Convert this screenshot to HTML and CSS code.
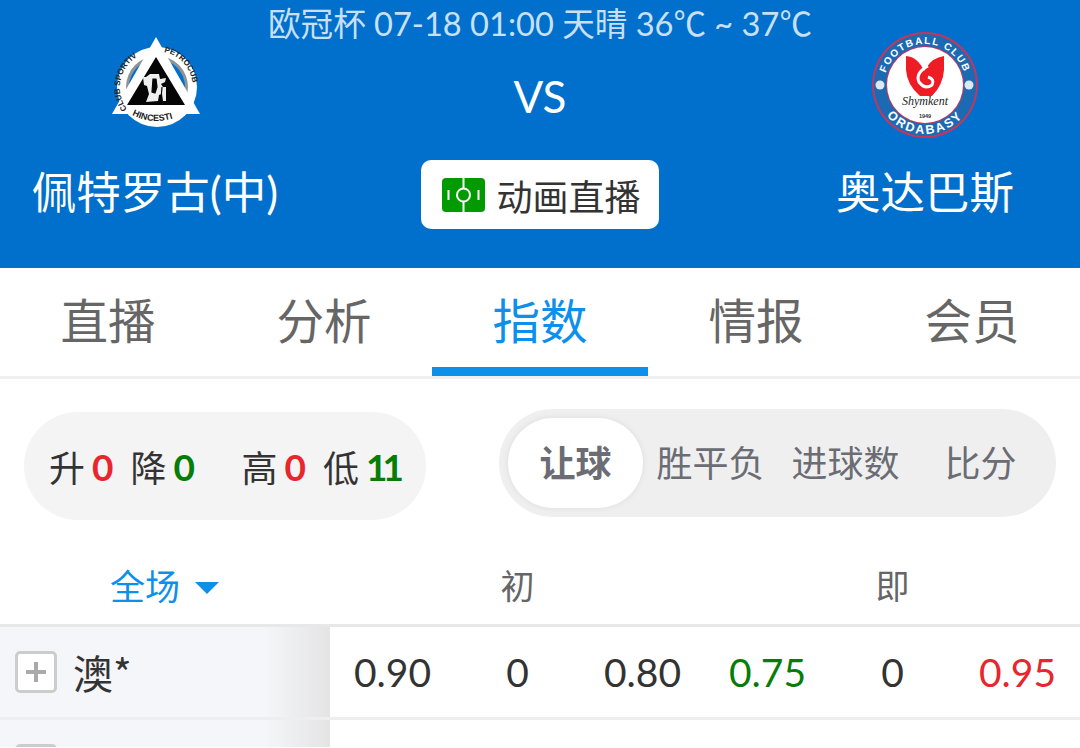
FILE: index.html
```html
<!DOCTYPE html>
<html lang="zh-CN">
<head>
  <meta charset="UTF-8">
  <meta name="viewport" content="width=device-width, initial-scale=1.0">
  <title>指数</title>
  <link rel="stylesheet" href="styles.css">
</head>
<body>
  <header class="match">
    <div class="match-info">欧冠杯 07-18 01:00 天晴 36℃ ~ 37℃</div>
    <div class="match-main">
      <div class="team">
        <svg class="team-logo" viewBox="0 7 130 106">
          <defs>
            <path id="leftArc" d="M37 84A36 36 0 0 1 60 27"/>
            <path id="rightArc" d="M74 27A36 36 0 0 1 97 82"/>
            <path id="hinArc" d="M42 90Q66 102 92 90"/>
          </defs>
          <circle cx="67" cy="62" r="40" fill="#fff"/>
          <circle cx="67" cy="62" r="31" fill="#8d9398"/>
          <circle cx="67" cy="62" r="28" fill="#0070cc"/>
          <path d="M37 86Q66 112 97 86Z" fill="#fff"/>
          <path d="M66 12L110 89H22Z" fill="#fff"/>
          <path d="M66 32L95 80H37Z" fill="#050505"/>
          <path d="M60 49h9l1 5l6-1l-1 4l-4 2l2 3l3 0v14h-3l-1-7l-3 1l-1 6l-12 1l3-8l-2-8l-3-1l-1-8l3 0z" fill="#eee"/>
          <path d="M63 54l3 0l1 8l-2 6l-3-1zM72 62l-1 12" stroke="#050505" stroke-width="1.2" fill="#050505"/>
          <text class="logo-ring" fill="#222"><textPath href="#leftArc">CLUB SPORTIV</textPath></text>
          <text class="logo-ring" fill="#222"><textPath href="#rightArc">PETROCUB</textPath></text>
          <text class="logo-hin" fill="#222"><textPath href="#hinArc">HINCESTI</textPath></text>
        </svg>
        <div class="team-name">佩特罗古(中)</div>
      </div>
      <div class="center">
        <div class="vs">VS</div>
        <div class="live-btn">
          <svg class="pitch" viewBox="0 0 43 34">
            <rect width="43" height="34" rx="4" fill="#019a01"/>
            <path d="M21.5 0V34M6.500 12V22M36.500 12V22" stroke="#fff" stroke-width="2" fill="none"/>
            <circle cx="21.5" cy="17" r="6.500" fill="#019a01" stroke="#fff" stroke-width="2"/>
          </svg>
          <span>动画直播</span>
        </div>
      </div>
      <div class="team">
        <svg class="team-logo" viewBox="0 7 130 106">
          <defs>
            <path id="topArc" d="M24 60A41 41 0 0 1 106 60"/>
            <path id="botArc" d="M16 60A49 49 0 0 0 114 60"/>
          </defs>
          <circle cx="65" cy="60" r="53" fill="#c2385c"/>
          <circle cx="65" cy="60" r="51" fill="#1c69b4"/>
          <circle cx="65" cy="60" r="39" fill="#c2385c"/>
          <circle cx="65" cy="60" r="38" fill="#fff"/>
          <path d="M46 31Q58 32 64 46L67 42Q72 33 84 31V45Q83 60 72 71H60Q47 60 46 45Z" fill="#ee1c25"/>
          <path d="M68 41Q55 48 59 57Q65 65 72 60Q75 54 68 52" fill="none" stroke="#fff" stroke-width="3"/>
          <circle cx="20" cy="60" r="4.500" fill="#dce9f5"/>
          <circle cx="109" cy="60" r="4.500" fill="#dce9f5"/>
          <text class="logo-top" fill="#fff"><textPath href="#topArc" startOffset="50%" text-anchor="middle">FOOTBALL CLUB</textPath></text>
          <text class="logo-bot" fill="#fff"><textPath href="#botArc" startOffset="50%" text-anchor="middle">ORDABASY</textPath></text>
          <text class="logo-script" x="65" y="80" text-anchor="middle" fill="#222">Shymkent</text>
          <text class="logo-year" x="65" y="93" text-anchor="middle" fill="#333">1949</text>
        </svg>
        <div class="team-name">奥达巴斯</div>
      </div>
    </div>
  </header>

  <nav class="tabs">
    <div class="tab">直播</div>
    <div class="tab">分析</div>
    <div class="tab active">指数</div>
    <div class="tab">情报</div>
    <div class="tab">会员</div>
  </nav>

  <section class="filters">
    <div class="stats">
      <div class="stat-group">
        <span>升</span><b class="red">0</b>
        <span class="stat-next">降</span><b class="green">0</b>
      </div>
      <div class="stat-group">
        <span>高</span><b class="red">0</b>
        <span class="stat-next">低</span><b class="green tight">11</b>
      </div>
    </div>
    <div class="switch">
      <div class="switch-item on">让球</div>
      <div class="switch-item">胜平负</div>
      <div class="switch-item">进球数</div>
      <div class="switch-item">比分</div>
    </div>
  </section>

  <div class="table-head">
    <div class="scope">全场<i class="caret"></i></div>
    <div class="head-col">初</div>
    <div class="head-col">即</div>
  </div>

  <div class="row">
    <div class="row-name"><span class="plus"></span><span class="company">澳*</span></div>
    <div class="cell">0.90</div>
    <div class="cell">0</div>
    <div class="cell">0.80</div>
    <div class="cell green">0.75</div>
    <div class="cell">0</div>
    <div class="cell red">0.95</div>
  </div>
  <div class="row row-cut">
    <div class="row-name"><span class="plus"></span></div>
  </div>
</body>
</html>
```

FILE: styles.css
```css
html, body {
  height: 100%;
}
body {
  margin: 0;
  background: #fff;
  color: #333;
  font-family: Lato, "Noto Sans CJK SC", sans-serif;
  overflow: hidden;
}

/* header */
.match {
  height: 268px;
  background: #0070cc;
  color: #fff;
}
.match-info {
  height: 48px;
  margin-bottom: -16px;
  line-height: 48px;
  font-size: 32.6px;
  text-align: center;
  color: #c9e0f4;
}
.match-main {
  display: grid;
  grid-template-columns: 310px 1fr 310px;
}
.team {
  display: flex;
  flex-direction: column;
  align-items: center;
}
.team-logo {
  width: 130px;
  height: 106px;
}
.team-name {
  margin-top: 24px;
  line-height: 60px;
  font-size: 44.5px;
  white-space: nowrap;
}
.center {
  display: flex;
  flex-direction: column;
  align-items: center;
}
.vs {
  height: 128px;
  line-height: 128px;
  font-size: 44px;
}
.live-btn {
  display: flex;
  align-items: center;
  gap: 11px;
  height: 69px;
  padding: 0 18px 0 21px;
  border-radius: 10px;
  background: #fff;
  color: #333;
  font-size: 36px;
}
.pitch {
  width: 43px;
  height: 34px;
}
.logo-ring {
  font-size: 8px;
  font-weight: 700;
  font-family: "Liberation Sans", sans-serif;
}
.logo-hin {
  font-size: 9px;
  font-weight: 700;
  font-family: "Liberation Sans", sans-serif;
}
.logo-top {
  font-size: 10px;
  font-weight: 700;
  letter-spacing: 1.5px;
  font-family: "Liberation Sans", sans-serif;
}
.logo-bot {
  font-size: 12.5px;
  font-weight: 700;
  letter-spacing: 2px;
  font-family: "Liberation Sans", sans-serif;
}
.logo-script {
  font-size: 12px;
  font-style: italic;
  font-family: "Liberation Serif", serif;
}
.logo-year {
  font-size: 5.5px;
  font-weight: 700;
  font-family: "Liberation Sans", sans-serif;
}

/* tabs */
.tabs {
  display: grid;
  grid-template-columns: repeat(5, 1fr);
  height: 108px;
  border-bottom: 3px solid #f0f0f0;
}
.tab {
  height: 108px;
  box-sizing: border-box;
  line-height: 106px;
  text-align: center;
  font-size: 47.5px;
  color: #666;
}
.tab.active {
  color: #0e8fea;
  border-bottom: 9px solid #0e8fea;
}

/* pills */
.filters {
  display: flex;
  justify-content: space-between;
  height: 141px;
  padding: 30px 24px 0;
  box-sizing: border-box;
}
.stats {
  display: flex;
  justify-content: space-between;
  width: 402px;
  height: 108px;
  margin-top: 3px;
  padding: 0 27px 0 25px;
  box-sizing: border-box;
  border-radius: 54px;
  background: #f4f4f4;
  font-size: 36px;
}
.stat-group {
  display: flex;
  align-items: center;
  gap: 7px;
}
.stat-group b {
  font-size: 37px;
}
.stat-group .tight {
  letter-spacing: -5px;
}
.stat-next {
  margin-left: 10px;
}
.red {
  color: #e8262d;
}
.green {
  color: #067d06;
}
.switch {
  display: grid;
  grid-template-columns: 135px 135px 135px 135px;
  width: 557px;
  height: 108px;
  padding: 9px;
  box-sizing: border-box;
  border-radius: 54px;
  background: #efefef;
  font-size: 36px;
  color: #6b6c74;
}
.switch-item {
  line-height: 90px;
  text-align: center;
}
.switch-item.on {
  border-radius: 45px;
  background: #fff;
  box-shadow: 0 0 6px rgba(0, 0, 0, 0.08);
  font-weight: 700;
}

/* table */
.table-head {
  display: grid;
  grid-template-columns: 330px 375px 375px;
  height: 104px;
  border-bottom: 3px solid #e8e8e8;
  line-height: 132px;
  font-size: 34px;
  color: #666;
  text-align: center;
}
.table-head > div {
  height: 104px;
  overflow: hidden;
}
.scope {
  display: flex;
  justify-content: flex-start;
  padding-left: 110px;
  font-size: 35px;
  color: #0e8fea;
}
.caret {
  width: 0;
  height: 0;
  margin: 62px 0 0 15px;
  border-left: 12px solid transparent;
  border-right: 12px solid transparent;
  border-top: 12px solid #0e8fea;
}
.row {
  display: grid;
  grid-template-columns: 330px repeat(6, 125px);
  height: 90px;
  border-bottom: 3px solid #eee;
}
.row-cut {
  height: 27px;
  border-bottom: 0;
  overflow: hidden;
}
.row-name {
  display: flex;
  align-items: center;
  padding-left: 15px;
  background: linear-gradient(to right, #f5f6f9 80%, #e4e4e5 100%);
}
.row-cut .row-name {
  align-items: flex-start;
  padding-top: 24px;
}
.plus {
  position: relative;
  flex: none;
  width: 36px;
  height: 36px;
  border: 3px solid #ccc;
  border-radius: 5px;
  background: #fff;
}
.plus::before,
.plus::after {
  content: "";
  position: absolute;
  background: #aaa;
}
.plus::before {
  left: 8px;
  top: 16px;
  width: 20px;
  height: 4px;
}
.plus::after {
  left: 16px;
  top: 8px;
  width: 4px;
  height: 20px;
}
.company {
  margin-left: 16px;
  font-family: "Noto Sans CJK SC", sans-serif;
  font-size: 40px;
  line-height: 80px;
}
.cell {
  line-height: 90px;
  text-align: center;
  font-size: 39px;
}
```
